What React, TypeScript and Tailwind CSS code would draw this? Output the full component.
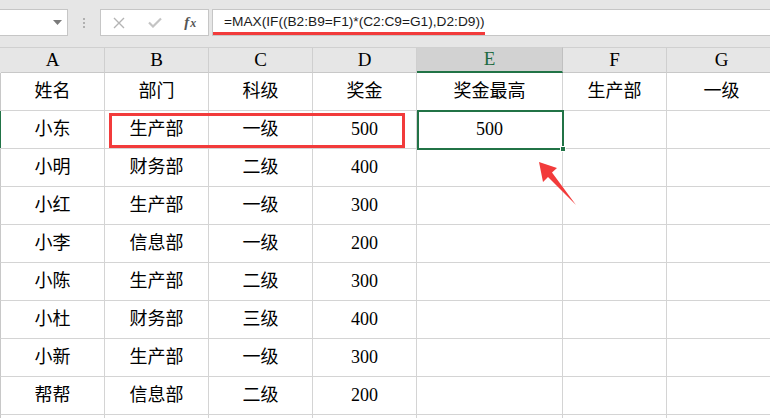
import React from "react";

const cols = [
  { key: "A", w: "w-[104px]" },
  { key: "B", w: "w-[104px]" },
  { key: "C", w: "w-[104px]" },
  { key: "D", w: "w-[104px]" },
  { key: "E", w: "w-[146px]" },
  { key: "F", w: "w-[104px]" },
  { key: "G", w: "w-[110px]" },
];

const rows: string[][] = [
  ["姓名", "部门", "科级", "奖金", "奖金最高", "生产部", "一级"],
  ["小东", "生产部", "一级", "500", "500", "", ""],
  ["小明", "财务部", "二级", "400", "", "", ""],
  ["小红", "生产部", "一级", "300", "", "", ""],
  ["小李", "信息部", "一级", "200", "", "", ""],
  ["小陈", "生产部", "二级", "300", "", "", ""],
  ["小杜", "财务部", "三级", "400", "", "", ""],
  ["小新", "生产部", "一级", "300", "", "", ""],
  ["帮帮", "信息部", "二级", "200", "", "", ""],
  ["", "", "", "", "", "", ""],
];

const cellFont = {
  fontFamily: '"Liberation Serif", "Noto Sans CJK SC", serif',
};

export default function App() {
  return (
    <div className="relative w-[770px] h-[418px] overflow-hidden bg-[#e6e6e6]">
      {/* Toolbar */}
      <div className="h-[47px] pt-[9px] flex items-start">
        <div className="w-[68px] h-[27px] bg-white border border-[#c6c6c6] border-l-0 flex items-center justify-end pr-[5px]">
          <svg width="9" height="5" viewBox="0 0 9 5">
            <path d="M0 0 L9 0 L4.5 5 Z" fill="#7a7a7a" />
          </svg>
        </div>
        <div className="w-[32px] h-[27px] flex flex-col items-center justify-center gap-[2px]">
          <div className="w-[2px] h-[2px] bg-[#b0b0b0]" />
          <div className="w-[2px] h-[2px] bg-[#b0b0b0]" />
          <div className="w-[2px] h-[2px] bg-[#b0b0b0]" />
        </div>
        <div className="w-[109px] h-[27px] bg-white border border-[#c6c6c6] flex items-center">
          <div className="w-[36px] flex justify-center">
            <svg width="12" height="12" viewBox="0 0 12 12">
              <path d="M1 1 L11 11 M11 1 L1 11" stroke="#b4b4b4" strokeWidth="1.4" />
            </svg>
          </div>
          <div className="w-[36px] flex justify-center">
            <svg width="14" height="11" viewBox="0 0 14 11">
              <path d="M1 5.5 L5 9.5 L13 1.5" stroke="#c4c4c4" strokeWidth="2.2" fill="none" />
            </svg>
          </div>
          <div
            className="w-[36px] flex justify-center items-baseline text-[15px] italic font-bold text-[#555] leading-none"
            style={{ fontFamily: '"Liberation Serif", serif' }}
          >
            <span>f</span>
            <span className="text-[12px] ml-[1px]">x</span>
          </div>
        </div>
        <div className="ml-[3px] flex-1 h-[27px] bg-white border border-[#c6c6c6] border-r-0 relative">
          <div
            className="pl-[11px] pt-[3px] text-[13.7px] text-[#1a1a1a] leading-[18px]"
            style={{ fontFamily: '"Liberation Sans", Arial, sans-serif' }}
          >
            =MAX(IF((B2:B9=F1)*(C2:C9=G1),D2:D9))
          </div>
          <div className="absolute left-0 top-[22px] w-[272px] h-[3px] bg-[#f23b3b]" />
        </div>
      </div>

      {/* Grid */}
      <div className="flex bg-white" style={cellFont}>
        {/* Row header sliver */}
        <div className="w-[2px] flex flex-col">
          <div className="h-[26px] bg-[#e6e6e6] border-t border-[#d0d0d0]" />
          {rows.map((_, i) => (
            <div
              key={i}
              className={
                "h-[38px] border-b border-[#d4d4d4] " +
                (i === 1 ? "bg-[#217346]" : "bg-white border-r border-r-[#c8c8c8]")
              }
            />
          ))}
        </div>
        {cols.map((c, ci) => (
          <div key={c.key} className={c.w + " flex flex-col shrink-0"}>
            <div
              className={
                "h-[26px] border-t border-[#d0d0d0] border-r flex items-center justify-center text-[19px] " +
                (c.key === "E"
                  ? "bg-[#d2d2d2] text-[#1e6b41] border-b-2 border-b-[#217346] border-r-[#c0c0c0]"
                  : "bg-[#e6e6e6] text-black border-b border-b-[#c8c8c8] border-r-[#cfcfcf]")
              }
            >
              {c.key}
            </div>
            {rows.map((r, ri) => (
              <div
                key={ri}
                className="h-[38px] border-r border-b border-[#d4d4d4] flex items-center justify-center text-[18px] text-black"
              >
                {r[ci]}
              </div>
            ))}
          </div>
        ))}
      </div>

      {/* Active cell E2 */}
      <div className="absolute left-[417px] top-[110px] w-[147px] h-[40px] border-2 border-[#217346] pointer-events-none" />
      <div className="absolute left-[560px] top-[146px] w-[6px] h-[6px] bg-[#217346] border border-white" />

      {/* Red highlight rectangle */}
      <div className="absolute left-[109px] top-[113px] w-[296px] h-[35px] border-[3px] border-[#f23b3b] pointer-events-none" />

      {/* Red arrow */}
      <svg className="absolute left-0 top-0 pointer-events-none" width="770" height="418">
        <polygon
          points="539,162 557,168 552,172.5 576,205 548,177 543,182"
          fill="#f23b3b"
        />
      </svg>
    </div>
  );
}
